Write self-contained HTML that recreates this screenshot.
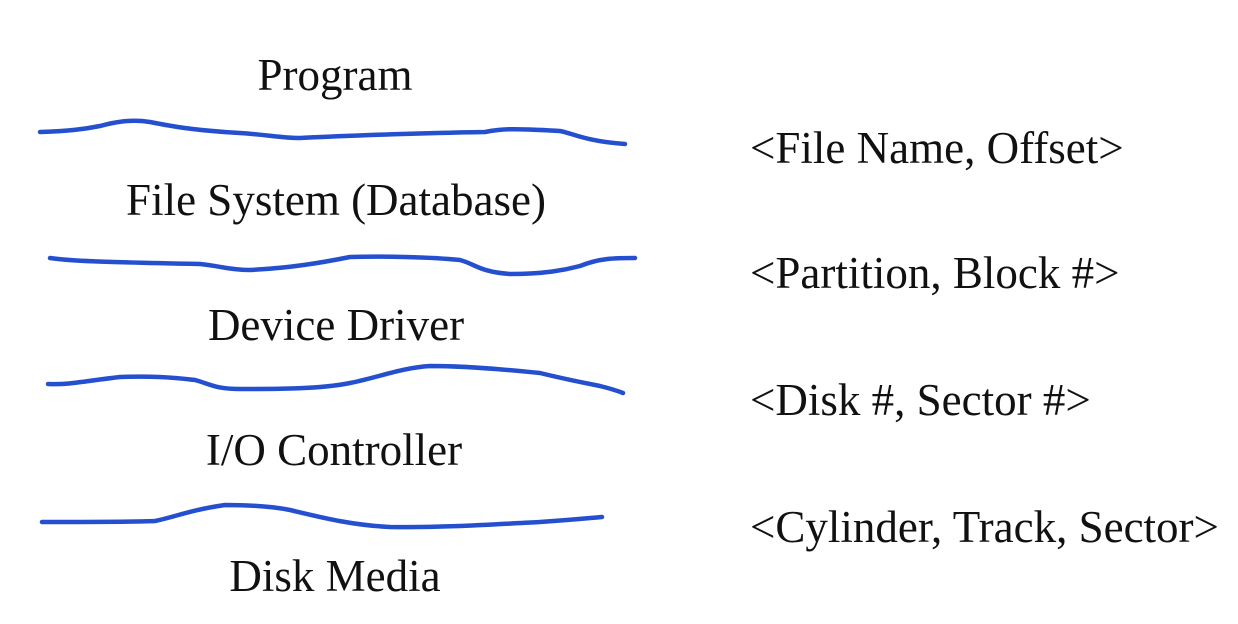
<!DOCTYPE html>
<html><head><meta charset="utf-8"><style>
html,body{margin:0;padding:0;background:#fff;}
svg{display:block}
text{font-family:"Liberation Serif",serif;font-size:45px;fill:#111;}
</style></head><body>
<svg width="1238" height="624" viewBox="0 0 1238 624" xmlns="http://www.w3.org/2000/svg">
<g fill="none" stroke="#2450cf" stroke-width="4.5" stroke-linecap="round" stroke-linejoin="round">
<path d="M40 132 C70 131 85 129 100 126 C115 122 130 119 150 122 C170 126 190 130 240 133 C270 135 280 138 300 138 C340 136 420 133 485 132 C500 129 510 128 560 131 C575 134 585 141 625 144"/>
<path d="M50 258 C70 261 100 262 200 264 C220 266 230 270 250 270 C290 268 320 263 350 257 C380 256 430 257 460 260 C475 264 480 272 510 274 C545 274 565 270 580 266 C600 258 615 258 635 258"/>
<path d="M48 384 C70 385 85 381 120 377 C150 376 170 377 195 380 C210 384 215 389 240 389 C280 389 320 389 350 383 C380 377 400 368 430 366 C460 366 490 368 540 373 C560 378 580 382 600 386 C612 389 618 391 623 393"/>
<path d="M42 522 C90 522 130 522 155 521 C175 517 190 510 225 505 C250 505 270 506 290 510 C320 517 350 525 390 527 C440 528 500 524 540 522 C570 520 590 518 602 517"/>
</g>
<g text-anchor="middle">
<text x="335" y="90">Program</text>
<text x="336" y="215">File System (Database)</text>
<text x="336" y="340">Device Driver</text>
<text x="334" y="465">I/O Controller</text>
<text x="335" y="591">Disk Media</text>
</g>
<text x="750" y="163">&lt;File Name, Offset&gt;</text>
<text x="750" y="288">&lt;Partition, Block #&gt;</text>
<text x="750" y="415">&lt;Disk #, Sector #&gt;</text>
<text x="750" y="542">&lt;Cylinder, Track, Sector&gt;</text>
</svg>
</body></html>
